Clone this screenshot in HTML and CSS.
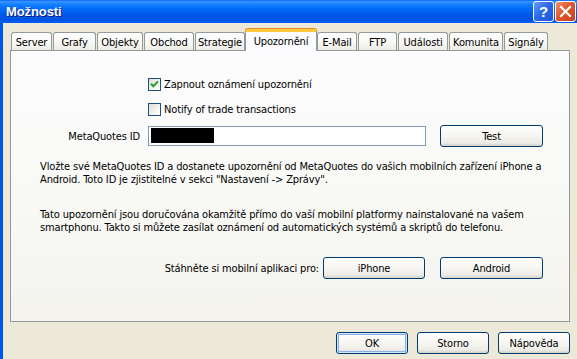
FILE: index.html
```html
<!DOCTYPE html>
<html lang="cs">
<head>
<meta charset="utf-8">
<title>Možnosti</title>
<link rel="stylesheet" href="styles.css">
</head>
<body>
<div class="window">
  <div class="titlebar">
    <span class="title">Možnosti</span>
    <div class="tbtns">
      <span class="tbtn help">?</span>
      <span class="tbtn close"><svg width="13" height="13" viewBox="0 0 13 13"><path d="M2 2 L11 11 M11 2 L2 11" stroke="#fff" stroke-width="2.2" stroke-linecap="square"/></svg></span>
    </div>
  </div>
  <div class="frame">
    <div class="client">
      <div class="tabs">
        <div class="tab">Server</div>
        <div class="tab">Grafy</div>
        <div class="tab">Objekty</div>
        <div class="tab">Obchod</div>
        <div class="tab">Strategie</div>
        <div class="tab active">Upozornění</div>
        <div class="tab">E-Mail</div>
        <div class="tab">FTP</div>
        <div class="tab">Události</div>
        <div class="tab">Komunita</div>
        <div class="tab">Signály</div>
      </div>
      <div class="panel">
        <div class="check-row">
          <span class="checkbox"><svg width="11" height="11" viewBox="0 0 11 11"><path d="M2 4.8 L4.3 7.2 L9 2.4" fill="none" stroke="#21A121" stroke-width="2"/></svg></span>
          <span>Zapnout oznámení upozornění</span>
        </div>
        <div class="check-row second">
          <span class="checkbox"></span>
          <span>Notify of trade transactions</span>
        </div>
        <div class="id-row">
          <span class="id-label">MetaQuotes ID</span>
          <span class="input"><span class="redact"></span></span>
          <span class="btn btn-test">Test</span>
        </div>
        <p class="para">Vložte své MetaQuotes ID a dostanete upozornění od MetaQuotes do vašich mobilních zařízení iPhone a<br>Android. Toto ID je zjistitelné v sekci "Nastavení -&gt; Zprávy".</p>
        <p class="para para2">Tato upozornění jsou doručována okamžitě přímo do vaší mobilní platformy nainstalované na vašem<br>smartphonu. Takto si můžete zasílat oznámení od automatických systémů a skriptů do telefonu.</p>
        <div class="dl-row">
          <span class="dl-label">Stáhněte si mobilní aplikaci pro:</span>
          <span class="btn btn-iphone">iPhone</span>
          <span class="btn btn-android">Android</span>
        </div>
      </div>
      <div class="actions">
        <span class="btn btn-dlg default">OK</span>
        <span class="btn btn-dlg">Storno</span>
        <span class="btn btn-dlg">Nápověda</span>
      </div>
    </div>
  </div>
</div>
</body>
</html>
```

FILE: styles.css
```css
html, body {
  margin: 0;
  padding: 0;
  background: #ECE9D8;
}
body {
  font-family: "DejaVu Sans Condensed", "DejaVu Sans", sans-serif;
  font-stretch: condensed;
  font-size: 11px;
  letter-spacing: -0.14px;
  color: #000;
}
.window {
  width: 577px;
  height: 359px;
  display: flex;
  flex-direction: column;
  overflow: hidden;
  background: #ECE9D8;
}
.titlebar {
  height: 23px;
  flex: none;
  display: flex;
  align-items: center;
  justify-content: space-between;
  padding-left: 6px;
  padding-right: 1px;
  background: linear-gradient(to bottom, #0058EE 0%, #3A93FF 5%, #288EFF 10%, #127DFF 22%, #036FFC 36%, #0262EE 50%, #0057E5 66%, #0054E3 82%, #0055EB 92%, #005BF5 97%, #026AFE 100%);
}
.title {
  font-family: "Liberation Sans", Arial, sans-serif;
  font-weight: bold;
  font-size: 13px;
  color: #fff;
  text-shadow: 1px 1px 0 #0A1883;
  letter-spacing: -0.1px;
}
.tbtns {
  display: flex;
  gap: 1px;
  align-self: flex-start;
  margin-top: 1px;
}
.tbtn {
  width: 21px;
  height: 21px;
  box-sizing: border-box;
  border: 1px solid #fff;
  border-radius: 3px;
  display: flex;
  align-items: center;
  justify-content: center;
  color: #fff;
}
.help {
  background: linear-gradient(135deg, #6A9CF8 0%, #2D6BEA 45%, #1A55D8 100%);
  font-family: "Liberation Sans", Arial, sans-serif;
  font-weight: bold;
  font-size: 15px;
  letter-spacing: 0;
}
.close {
  background: linear-gradient(135deg, #F2906E 0%, #E2572E 45%, #C9401C 100%);
}
.frame {
  flex: 1;
  display: flex;
  border-left: 3px solid #0055EA;
}
.client {
  flex: 1;
  padding: 6px 0 0 7px;
}
.tabs {
  display: flex;
  align-items: flex-end;
  height: 21px;
  padding-left: 1px;
}
.tab {
  height: 18px;
  box-sizing: border-box;
  margin-right: 1px;
  border: 1px solid #919B9C;
  border-bottom: none;
  border-radius: 3px 3px 0 0;
  background: linear-gradient(to bottom, #FFFFFF 0%, #F7F7F4 60%, #ECEBE5 100%);
  display: flex;
  align-items: center;
  justify-content: center;
  line-height: 1;
  padding-top: 1px;
}
.tab:nth-child(1) { width: 41px; }
.tab:nth-child(2) { width: 43px; }
.tab:nth-child(3) { width: 46px; }
.tab:nth-child(4) { width: 50px; }
.tab:nth-child(5) { width: 50px; }
.tab:nth-child(6) { width: 72px; }
.tab:nth-child(7) { width: 40px; }
.tab:nth-child(8) { width: 39px; }
.tab:nth-child(9) { width: 50px; }
.tab:nth-child(10) { width: 54px; }
.tab:nth-child(11) { width: 44px; }
.tab.active {
  height: 22px;
  margin-bottom: -1px;
  margin-left: -1px;
  margin-right: 0;
  border-top: 3px solid #FFC83C;
  box-shadow: 0 -1px 0 #E68B2C;
  background: #FCFCFE;
  position: relative;
  z-index: 1;
  padding-top: 0;
}
.panel {
  width: 560px;
  height: 272px;
  box-sizing: border-box;
  border: 1px solid #919B9C;
  background: linear-gradient(to bottom, #FCFCFE 0%, #F9F9F6 50%, #F4F3EE 100%);
  padding: 27px 26px 0 29px;
}
.check-row {
  display: flex;
  align-items: center;
  height: 13px;
  margin-left: 108px;
  gap: 3px;
}
.check-row.second {
  margin-top: 12px;
}
.checkbox {
  width: 13px;
  height: 13px;
  box-sizing: border-box;
  border: 1px solid #1C5180;
  background: linear-gradient(135deg, #DCDCD7 0%, #F4F4F0 60%, #FFFFFF 100%);
  display: flex;
  align-items: center;
  justify-content: center;
}
.id-row {
  display: flex;
  align-items: center;
  height: 22px;
  margin-top: 9px;
}
.id-label {
  width: 100px;
  text-align: right;
}
.input {
  width: 278px;
  height: 20px;
  box-sizing: border-box;
  margin-left: 8px;
  border: 1px solid #7F9DB9;
  background: #fff;
  padding: 1px;
  display: flex;
}
.redact {
  width: 63px;
  height: 15px;
  background: #000;
  margin-left: 1px;
}
.btn {
  height: 22px;
  box-sizing: border-box;
  border: 1px solid #003C74;
  border-radius: 3px;
  background: linear-gradient(to bottom, #FFFFFF 0%, #F5F4EF 55%, #ECEBE6 85%, #D6D0C5 100%);
  display: flex;
  align-items: center;
  justify-content: center;
}
.btn-test {
  width: 103px;
  margin-left: 14px;
}
.para {
  margin: 13px 0 0 0;
  line-height: 13px;
  white-space: nowrap;
}
.para.para2 {
  margin-top: 22px;
}
.dl-row {
  display: flex;
  justify-content: flex-end;
  align-items: center;
  margin-top: 23px;
}
.btn-iphone {
  width: 102px;
  margin-left: 4px;
}
.btn-android {
  width: 103px;
  margin-left: 15px;
}
.actions {
  display: flex;
  justify-content: flex-end;
  gap: 9px;
  width: 560px;
  margin-top: 10px;
}
.btn-dlg {
  width: 72px;
}
.btn.default {
  box-shadow: inset 0 0 0 1px #CEE7FF, inset 0 0 0 2px #89ADE4;
}
```
